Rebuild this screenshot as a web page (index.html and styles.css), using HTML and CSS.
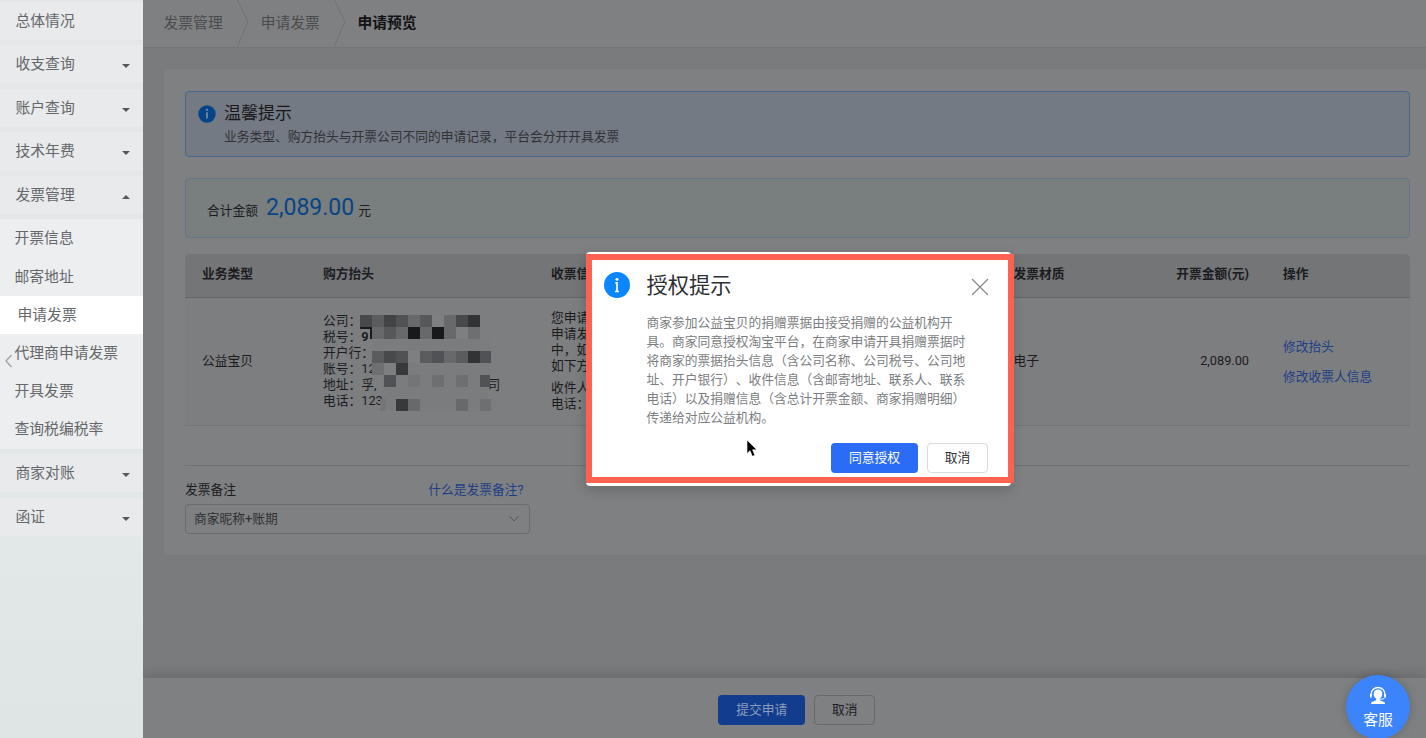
FILE: index.html
```html
<!DOCTYPE html>
<html lang="zh-CN">
<head>
<meta charset="utf-8">
<title>申请预览</title>
<link rel="stylesheet" href="styles.css">
</head>
<body>
<div class="app">
  <nav class="side">
    <div class="menu">总体情况</div>
    <div class="menu">收支查询<i class="caret"></i></div>
    <div class="menu">账户查询<i class="caret"></i></div>
    <div class="menu">技术年费<i class="caret"></i></div>
    <div class="menu">发票管理<i class="caret up"></i></div>
    <div class="submenu">
      <div class="sub">开票信息</div>
      <div class="sub">邮寄地址</div>
      <div class="sub active">申请发票</div>
      <div class="sub">代理商申请发票</div>
      <div class="sub">开具发票</div>
      <div class="sub">查询税编税率</div>
    </div>
    <div class="menu">商家对账<i class="caret"></i></div>
    <div class="menu">函证<i class="caret"></i></div>
    <svg class="collapse" viewBox="0 0 8 14"><path d="M7 1 1.5 7 7 13"/></svg>
  </nav>

  <main class="main">
    <header class="crumbs">
      <span>发票管理</span>
      <svg class="sep" viewBox="0 0 12 48"><path d="M0 0 11 22.500 0 48"/></svg>
      <span>申请发票</span>
      <svg class="sep" viewBox="0 0 12 48"><path d="M0 0 11 22.500 0 48"/></svg>
      <span class="current">申请预览</span>
    </header>

    <section class="card">
      <div class="alert">
        <svg class="info" viewBox="0 0 18 18"><circle cx="9" cy="9" r="8.700" fill="#06448a"/><circle cx="9" cy="4.900" r="1.100" fill="#7f8a98"/><path d="M9 7.300V13.500" stroke="#7f8a98" stroke-width="1.700"/></svg>
        <div>
          <div class="alert-title">温馨提示</div>
          <div class="alert-text">业务类型、购方抬头与开票公司不同的申请记录，平台会分开开具发票</div>
        </div>
      </div>

      <div class="total"><span>合计金额</span><b>2,089.00</b><span>元</span></div>

      <div class="grid head">
        <div>业务类型</div><div>购方抬头</div><div>收票信</div><div>发票材质</div><div class="num">开票金额(元)</div><div class="ops">操作</div>
      </div>
      <div class="grid row">
        <div>公益宝贝</div>
        <div class="buyer">
          <p>公司：</p>
          <p>税号：<b>9</b></p>
          <p>开户行：</p>
          <p>账号：12</p>
          <p class="addr">地址：孚,<span>司</span></p>
          <p>电话：123</p>
          <svg class="mosaic" viewBox="0 0 132 96" shape-rendering="crispEdges">
            <path fill="#7b7c7e" d="M12 24h118v12H12zM16 36h114v24H16zM22 60h106v36H22z"/>
            <path fill="#48494b" d="M0 0h12v12H0zM96 0h12v12H96zM24 36h12v12H24z"/>
            <path fill="#5b5c5e" d="M12 0h12v12H12zM12 36h12v12H12zM60 36h12v12H60zM96 36h12v12H96z"/>
            <path fill="#424345" d="M24 0h12v12H24z"/>
            <path fill="#505255" d="M36 0h12v12H36zM36 36h12v12H36zM72 36h12v12H72zM120 36h11v12h-11zM24 60h12v12H24zM120 60h10v12h-10z"/>
            <path fill="#68696b" d="M48 0h12v12H48zM84 0h12v12H84zM12 12h12v12H12zM36 12h12v12H36zM60 12h12v12H60zM84 12h12v12H84zM84 36h12v12H84zM48 84h12v12H48zM96 84h12v12H96z"/>
            <path fill="#57585a" d="M60 0h12v12H60zM24 12h12v12H24z"/>
            <path fill="#7e7f81" d="M72 0h12v12H72zM96 12h12v12H96zM48 36h12v12H48zM24 48h12v12H24z"/>
            <path fill="#323335" d="M108 0h12v12h-12zM108 36h12v12h-12z"/>
            <path fill="#18191b" d="M48 12h12v12H48zM72 12h12v12H72z"/>
            <path fill="#6e6f71" d="M108 12h12v12h-12zM12 48h12v12H12zM72 60h12v12H72zM96 60h12v12H96zM120 84h11v12h-11z"/>
            <path fill="#38393b" d="M36 48h12v12H36zM36 84h12v12H36z"/>
            <path fill="#747577" d="M48 60h12v12H48zM20 84h6v12h-6z"/>
            <path fill="none" stroke="#18191b" stroke-width="2" d="M0 13h11v11"/>
          </svg>
        </div>
        <div class="receiver"><p>您申请</p><p>申请发</p><p>中，如</p><p>如下方</p><p class="gap">收件人</p><p>电话：</p></div>
        <div>电子</div>
        <div class="num">2,089.00</div>
        <div class="ops"><a>修改抬头</a><a>修改收票人信息</a></div>
      </div>

      <div class="remark">
        <div class="remark-label"><span>发票备注</span><a>什么是发票备注?</a></div>
        <div class="select"><span>商家昵称+账期</span><svg viewBox="0 0 12 8"><path d="M1.500 1.200 6 6 10.500 1.200"/></svg></div>
      </div>
    </section>

    <footer class="footer">
      <div class="btn submit">提交申请</div>
      <div class="btn dim">取消</div>
    </footer>
  </main>
</div>

<div class="modal">
  <svg class="modal-icon" viewBox="0 0 26 26"><circle cx="13" cy="13" r="13" fill="#0a86ff"/><circle cx="13" cy="7.200" r="1.500" fill="#fff"/><path d="M11.300 10.800H13V19.500M11 19.500h4" stroke="#fff" stroke-width="1.700" fill="none"/></svg>
  <div class="modal-body">
    <h2>授权提示</h2>
    <p>商家参加公益宝贝的捐赠票据由接受捐赠的公益机构开<br>具。商家同意授权淘宝平台，在商家申请开具捐赠票据时<br>将商家的票据抬头信息（含公司名称、公司税号、公司地<br>址、开户银行）、收件信息（含邮寄地址、联系人、联系<br>电话）以及捐赠信息（含总计开票金额、商家捐赠明细）<br>传递给对应公益机构。</p>
    <div class="actions"><div class="btn primary">同意授权</div><div class="btn plain">取消</div></div>
  </div>
  <svg class="close" viewBox="0 0 18 18"><path d="M1 1 17 17M17 1 1 17"/></svg>
</div>
<div class="highlight"></div>
<svg class="cursor" viewBox="0 0 12 19"><path d="M1 1v13.500l3-2.800 2.300 5.600 2.600-1.100-2.300-5.400h4.200z" fill="#000" stroke="#fff" stroke-width=".6"/></svg>

<div class="service">
  <svg viewBox="0 0 18 19"><path d="M2 10V8.500a7 7 0 0 1 14 0V10" fill="none" stroke="#fff" stroke-width="1.300"/><path d="M1 8h1.800v3.500H1zM15.200 8H17v3.500h-1.800z" fill="#fff"/><path d="M9 3.600c2.800 0 4.300 1.800 4.300 4.300 0 2.200-1.100 3.900-2.500 4.700v1.600l4.200 1.700c.8.400 1 1.200 1 2.100H2c0-.9.200-1.700 1-2.100l4.200-1.700v-1.600C5.800 11.800 4.700 10.100 4.700 7.900c0-2.500 1.500-4.300 4.300-4.300z" fill="#fff"/><path d="M15.800 11.500c-.8 1.500-2.500 1.800-4.800 1.800" fill="none" stroke="#fff"/></svg>
  <span>客服</span>
</div>
</body>
</html>
```
FILE: styles.css
```css
* { box-sizing: border-box; }
body {
  margin: 0;
  width: 1426px;
  height: 738px;
  overflow: hidden;
  position: relative;
  font-family: Roboto, "Noto Sans CJK SC", sans-serif;
  font-size: 12.75px;
  line-height: 16px;
  text-spacing-trim: space-all;
  color: #1b1c1e;
  background: #7a7b7d;
}
p, h2 { margin: 0; font-weight: 400; }
a { color: #1d3f86; }

.app { display: flex; height: 738px; }

/* Sidebar */
.side {
  position: relative;
  width: 142.5px;
  flex: none;
  display: flex;
  flex-direction: column;
  gap: 5.4px;
  padding-top: 1.6px;
  background: linear-gradient(#e4e7e8 0, #e2e7e8 540px, #dfe5e5 100%);
  font-size: 14.8px;
  color: #65676a;
}
.menu {
  height: 38.2px;
  flex: none;
  padding: 0 13px 0 15.5px;
  display: flex;
  align-items: center;
  justify-content: space-between;
  background: #e8eaec;
}
.caret {
  border: 4.5px solid transparent;
  border-top-color: #55575a;
  border-bottom: 0;
  margin-top: 4px;
}
.caret.up {
  border-top: 0;
  border-bottom: 4.5px solid #55575a;
}
.submenu { background: #eceef0; }
.sub {
  height: 38.2px;
  padding-left: 14.5px;
  line-height: 38.2px;
}
.sub.active { background: #fff; padding-left: 17.5px; }
.collapse {
  position: absolute;
  left: 4px;
  top: 354px;
  width: 9px;
  height: 14px;
  fill: none;
  stroke: #9a9da0;
  stroke-width: 1.2;
}

/* Page */
.main {
  flex: 1;
  min-width: 0;
  display: flex;
  flex-direction: column;
  background: #7a7b7d;
}
.crumbs {
  height: 48px;
  flex: none;
  display: flex;
  align-items: center;
  padding-left: 21px;
  padding-bottom: 2px;
  background: #7f8082;
  border-bottom: 1px solid #747577;
  font-size: 14.8px;
  color: #4a4b4d;
}
.sep {
  width: 12px;
  height: 48px;
  margin: 0 12px 0 14px;
  fill: none;
  stroke: #707173;
  flex: none;
}
.current { color: #111214; font-weight: 700; margin-left: -.5px; }

.card {
  margin: 21px 0 0 21.5px;
  height: 486px;
  flex: none;
  padding: 22px 16px 0 21px;
  background: #7f8082;
  border-radius: 4px 0 0 4px;
}
.alert {
  height: 66px;
  display: flex;
  gap: 8px;
  padding: 11px 12px 0;
  border: 1px solid #44688b;
  border-radius: 4px;
  background: #747a83;
}
.info { width: 18px; height: 18px; margin-top: 2px; flex: none; }
.alert-title { font-size: 17px; line-height: 21px; color: #17181a; }
.alert-text { line-height: 18px; margin-top: 4px; color: #303236; }
.total {
  height: 60px;
  margin-top: 21px;
  padding: 0 21px;
  display: flex;
  align-items: baseline;
  line-height: 57px;
  border: 1px solid #66758c;
  border-radius: 4px;
  background: #797e7f;
}
.total b { font-weight: 400; font-size: 23px; color: #084586; margin: 0 4px 0 8px; }

.grid {
  display: grid;
  grid-template-columns: 121px 228px 462.5px 100px 135.5px 1fr;
  padding-left: 17px;
  align-items: center;
}
.num { text-align: right; }
.ops { padding-left: 34px; }
.head {
  height: 43.5px;
  margin-top: 16px;
  padding-bottom: 3px;
  background: #747577;
  border-bottom: 1px solid #646567;
  border-radius: 5px 5px 0 0;
  font-weight: 700;
}
.row { height: 128.5px; border-bottom: 1px solid #747577; background: #7d7e80; }
.buyer { position: relative; }
.addr { display: flex; }
.addr span { margin-left: 111px; }
.mosaic { position: absolute; left: 36.5px; top: 2px; width: 132px; height: 96px; }
.receiver .gap { margin-top: 6px; }
.ops a { display: block; line-height: 30px; position: relative; top: 1px; }

.remark {
  margin-top: 39px;
  border-top: 1px solid #717274;
  padding-top: 15px;
}
.remark-label { width: 338.5px; display: flex; justify-content: space-between; line-height: 18px; }
.select {
  width: 345px;
  height: 30px;
  margin-top: 5px;
  padding: 0 9px 0 8px;
  display: flex;
  align-items: center;
  justify-content: space-between;
  border: 1px solid #6a6b6d;
  border-radius: 4px;
  color: #303133;
}
.select svg { width: 12px; height: 8px; fill: none; stroke: #55575a; }

.footer {
  height: 60px;
  margin-top: auto;
  display: flex;
  justify-content: center;
  gap: 9px;
  padding: 17px 0 0 25px;
  background: #7f8082;
  box-shadow: 0 -3px 12px rgba(0, 0, 0, .16);
}
.btn {
  height: 30px;
  border: 1px solid transparent;
  border-radius: 4px;
  text-align: center;
  line-height: 28px;
}
.submit { width: 87px; background: #123c8e; color: #8b9bb9; }
.dim { width: 61px; border-color: #68696b; }

/* Dialog */
.modal {
  position: absolute;
  left: 585.5px;
  top: 252px;
  width: 425px;
  height: 234px;
  display: flex;
  padding: 20px 22.5px 0 18px;
  background: #fff;
  border-radius: 4px;
  box-shadow: 0 4px 14px rgba(0, 0, 0, .2);
}
.modal-icon { width: 26px; height: 26px; flex: none; }
.modal-body { margin-left: 17px; flex: 1; white-space: nowrap; }
.modal h2 { font-size: 21.25px; line-height: 28px; color: #2d2f33; }
.modal p { margin-top: 13px; line-height: 19.1px; color: #7c7e82; }
.actions { display: flex; gap: 9px; justify-content: flex-end; margin-top: 15.500px; }
.primary { width: 87px; background: #2b6cf6; color: #fff; }
.plain { width: 61px; border-color: #d8dadd; color: #303236; }
.close {
  position: absolute;
  right: 22px;
  top: 26px;
  width: 18px;
  height: 18px;
  stroke: #85878a;
  stroke-width: 1.2;
}
.highlight {
  position: absolute;
  left: 585.5px;
  top: 253.5px;
  width: 428px;
  height: 229px;
  border: 6px solid #ff6251;
}
.cursor { position: absolute; left: 746px; top: 439px; width: 12px; height: 19px; }

.service {
  position: absolute;
  left: 1346px;
  top: 675px;
  width: 64px;
  height: 64px;
  display: flex;
  flex-direction: column;
  align-items: center;
  padding-top: 11px;
  gap: 5px;
  border-radius: 50%;
  background: #3c84fc;
  box-shadow: 0 0 10px rgba(0, 0, 0, .2);
  color: #fff;
  font-size: 14.8px;
  line-height: 20px;
}
.service svg { width: 18px; height: 19px; }
```
